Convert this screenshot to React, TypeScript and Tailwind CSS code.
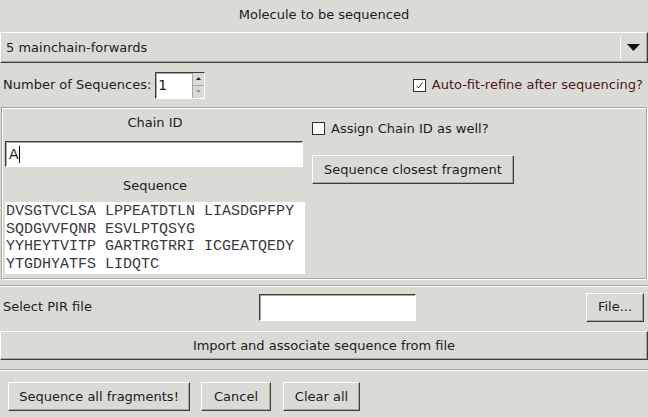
import React from 'react'

const raised = 'border border-t-white border-l-white border-b-[#3c3c3c] border-r-[#3c3c3c] shadow-[inset_-1px_-1px_0_#a8a8a3]'
const sunken = 'border border-t-[#3c3c3c] border-l-[#3c3c3c] border-b-white border-r-white bg-white shadow-[inset_1px_1px_0_#a8a8a3]'

function Button({ label, className = '' }: { label: string; className?: string }) {
  return (
    <button className={`${raised} bg-[#dbdbd6] flex items-center justify-center text-[13px] text-[#1c1c1c] ${className}`}>
      {label}
    </button>
  )
}

function Check({ checked = false }: { checked?: boolean }) {
  return (
    <span className="w-[13px] h-[13px] border border-[#2e2e2e] bg-white flex items-center justify-center shrink-0">
      {checked && (
        <svg width="9" height="9" viewBox="0 0 9 9">
          <path d="M1.5 4.8 L3.5 7 L7.5 1.5" fill="none" stroke="#333" strokeWidth="1" />
        </svg>
      )}
    </span>
  )
}

const sequence = [
  'DVSGTVCLSA LPPEATDTLN LIASDGPFPY',
  'SQDGVVFQNR ESVLPTQSYG',
  'YYHEYTVITP GARTRGTRRI ICGEATQEDY',
  'YTGDHYATFS LIDQTC',
]

export default function App() {
  return (
    <div className="w-[648px] h-[417px] bg-[#dbdbd6] text-[#1c1c1c] text-[13px] overflow-hidden flex flex-col" style={{ fontFamily: '"DejaVu Sans", sans-serif' }}>
      <div className="h-[32px] flex items-center justify-center pb-[2px]">Molecule to be sequenced</div>

      <div className={`h-[31px] ${raised} flex items-center`}>
        <span className="flex-1 pl-[5px]">5 mainchain-forwards</span>
        <span className="w-px h-[22px] bg-[#a8a8a3] border-r border-white mr-[6px]" />
        <svg width="13" height="7" viewBox="0 0 13 7" className="mr-[7px]">
          <path d="M0 0 H13 L6.5 7 Z" fill="#111" />
        </svg>
      </div>

      <div className="h-[44px] flex items-center pl-[3px] pr-[5px]">
        <span>Number of Sequences:</span>
        <div className={`ml-[4px] h-[27px] w-[50px] flex ${sunken}`}>
          <span className="flex-1 pl-[2px] leading-[25px] text-[14px]">1</span>
          <div className="w-[12px] flex flex-col border-l border-[#a8a8a3] bg-[#dbdbd6]">
            <div className="flex-1 flex items-center justify-center border-b border-[#a8a8a3]">
              <svg width="5" height="3" viewBox="0 0 5 3"><path d="M0 3 L2.5 0 L5 3 Z" fill="#222" /></svg>
            </div>
            <div className="flex-1 flex items-center justify-center">
              <svg width="5" height="3" viewBox="0 0 5 3"><path d="M0 0 L2.5 3 L5 0 Z" fill="#999" /></svg>
            </div>
          </div>
        </div>
        <div className="flex-1" />
        <Check checked />
        <span className="ml-[6px] text-[#4e1616]">Auto-fit-refine after sequencing?</span>
      </div>

      <div className="mx-[1px] h-[172px] border border-[#a8a8a3] shadow-[inset_1px_1px_0_white,1px_1px_0_white] flex pt-[2px]">
        <div className="w-[300px] ml-[3px] flex flex-col">
          <div className="h-[31px] flex items-center justify-center pb-[5px]">Chain ID</div>
          <div className={`h-[26px] w-[298px] ${sunken} flex items-center pl-[3px]`}>
            <span className="text-[14px]">A</span>
            <span className="w-px h-[17px] bg-black" />
          </div>
          <div className="h-[35px] flex items-center justify-center pt-[2px]">Sequence</div>
          <div className="h-[72px] w-[300px] bg-white pl-[1px] pt-[1px] text-[#3a3a3a] text-[15px] leading-[17.7px] whitespace-pre" style={{ fontFamily: '"Liberation Mono", monospace' }}>
            {sequence.map((l) => <div key={l}>{l}</div>)}
          </div>
        </div>
        <div className="flex flex-col ml-[7px] pt-[11px]">
          <div className="flex items-center h-[15px]">
            <Check />
            <span className="ml-[6px]">Assign Chain ID as well?</span>
          </div>
          <Button label="Sequence closest fragment" className="mt-[19px] w-[202px] h-[29px]" />
        </div>
      </div>

      <div className="mt-[6px] h-px bg-[#a8a8a3] border-b border-white box-content" />

      <div className="h-[40px] flex items-center pl-[3px] pr-[4px]">
        <span className="w-[256px]">Select PIR file</span>
        <div className={`h-[27px] w-[157px] ${sunken}`} />
        <div className="flex-1" />
        <Button label="File..." className="w-[58px] h-[29px]" />
      </div>

      <Button label="Import and associate sequence from file" className="mt-[4px] h-[29px] w-[648px]" />

      <div className="mt-[9px] h-px bg-[#a8a8a3] border-b border-white box-content" />

      <div className="flex pl-[8px] pt-[11px] gap-[11px]">
        <Button label="Sequence all fragments!" className="w-[182px] h-[29px]" />
        <Button label="Cancel" className="w-[70px] h-[29px]" />
        <Button label="Clear all" className="w-[77px] h-[29px] ml-[1px]" />
      </div>
    </div>
  )
}
